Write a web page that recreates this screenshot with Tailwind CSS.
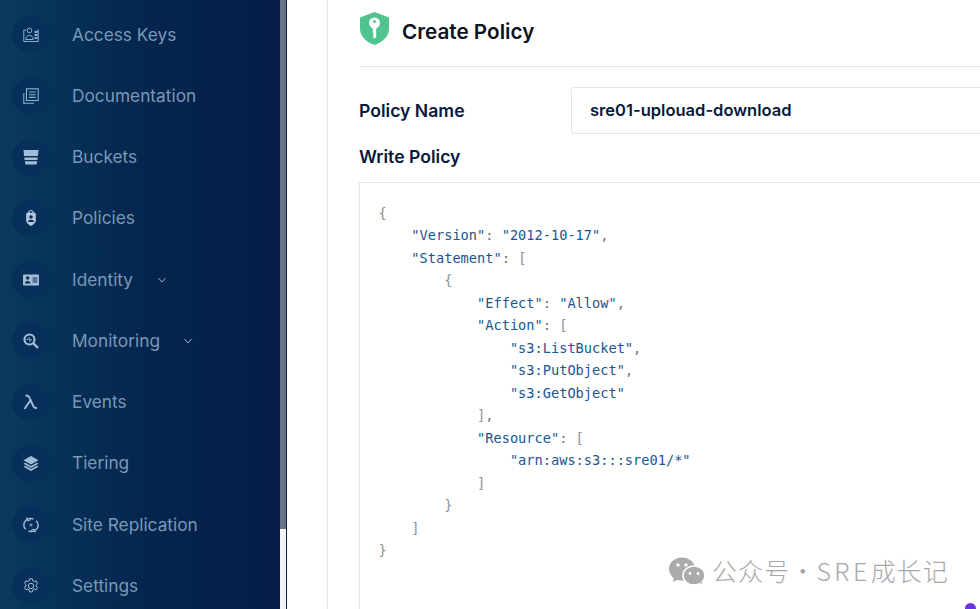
<!doctype html>
<html><head><meta charset="utf-8"><script src="https://cdn.jsdelivr.net/npm/@tailwindcss/browser@4"></script></head>
<body class="m-0 overflow-hidden bg-white">
<div class="flex h-[609px] w-[980px] overflow-hidden bg-white font-['Inter',sans-serif]">
  <!-- sidebar -->
  <aside class="flex h-full w-[280px] shrink-0 flex-col overflow-hidden bg-gradient-to-r from-[#0a3a5e] via-[#04264f] via-50% to-[#061c49] pt-[4px] text-[17.3px] text-[#7a98b6]">
    <div class="flex h-[61.25px] shrink-0 items-center"><span class="ml-3 flex h-[37px] w-[37px] items-center justify-center rounded-full bg-[#06305a]">
      <svg class="h-[16px] w-[16px]" viewBox="0 0 16 16" fill="none" stroke="#8eb0cf" stroke-width="1"><path d="M3 3H.8v11.500h14.400V3H14"/><circle cx="6.500" cy="3.500" r="2.300"/><path d="M2.800 12.500c0-5.500 7.400-5.500 7.400 0z"/><path d="M11.500 5h3M11.500 8h3M11.500 11h3" stroke-width="1.800"/></svg></span><span class="ml-[23px]">Access Keys</span></div>
    <div class="flex h-[61.25px] shrink-0 items-center"><span class="ml-3 flex h-[37px] w-[37px] items-center justify-center rounded-full bg-[#06305a]">
      <svg class="h-[16px] w-[16px]" viewBox="0 0 16 16" fill="none" stroke="#8eb0cf" stroke-width="1.100"><path d="M.8 5v10.200H11"/><rect x="3.500" y=".8" width="11.700" height="11.700"/><path d="M6 4h6.700M6 6.700h6.700M6 9.400h6.700"/></svg></span><span class="ml-[23px]">Documentation</span></div>
    <div class="flex h-[61.25px] shrink-0 items-center"><span class="ml-3 flex h-[37px] w-[37px] items-center justify-center rounded-full bg-[#06305a]">
      <svg class="h-[16px] w-[16px]" viewBox="0 0 16 16" fill="#a3bdd6"><path d="M.5 1h15l-.6 6H1.100zM1.300 8.500h13.400l-.2 2.500H1.600zM1.800 12.300h12.400l-.7 3.200h-11z"/></svg></span><span class="ml-[23px]">Buckets</span></div>
    <div class="flex h-[61.25px] shrink-0 items-center"><span class="ml-3 flex h-[37px] w-[37px] items-center justify-center rounded-full bg-[#06305a]">
      <svg class="h-[16px] w-[16px]" viewBox="0 0 16 16"><path fill="#b3c8dc" d="M8 0a3 3 0 0 1 3 2.600l1.800.6v7.300C12.800 13 10 15 8 16c-2-1-4.800-3-4.800-5.500V3.200L5 2.600A3 3 0 0 1 8 0z"/><path fill="#06305a" d="M6.300 2.800a1.700 1.700 0 0 1 3.400 0z"/><circle cx="8" cy="7" r="1.800" fill="#06305a"/><path fill="#06305a" d="M5 12c0-3 6-3 6 0z"/></svg></span><span class="ml-[23px]">Policies</span></div>
    <div class="flex h-[61.25px] shrink-0 items-center"><span class="ml-3 flex h-[37px] w-[37px] items-center justify-center rounded-full bg-[#06305a]">
      <svg class="h-[16px] w-[16px]" viewBox="0 0 16 16"><rect y="2.500" width="16" height="11" rx="1" fill="#a3bdd6"/><circle cx="4.700" cy="6" r="1.700" fill="#06305a"/><path fill="#06305a" d="M1.800 11.500c0-3.500 5.800-3.500 5.800 0z"/><path stroke="#06305a" d="M9.500 6h5M9.500 8h5M9.500 10h5"/></svg></span><span class="ml-[23px]">Identity</span>
      <span class="ml-[19px] flex h-[18px] w-[20px] items-center justify-center bg-[#05234d]"><svg class="h-[8px] w-[8px]" viewBox="0 0 8 8" fill="none" stroke="#8eb0cf"><path d="M.5 2 4 6l3.500-4"/></svg></span></div>
    <div class="flex h-[61.25px] shrink-0 items-center"><span class="ml-3 flex h-[37px] w-[37px] items-center justify-center rounded-full bg-[#06305a]">
      <svg class="h-[16px] w-[16px]" viewBox="0 0 16 16" fill="none"><circle cx="6.500" cy="6.500" r="5" stroke="#a3bdd6" stroke-width="2.200"/><path d="M3.500 6.500h1.500l1-2 1 4 .8-2h1.200" stroke="#a3bdd6" stroke-width=".8"/><path d="M10.500 10.500 15 15" stroke="#a3bdd6" stroke-width="2.400"/></svg></span><span class="ml-[23px]">Monitoring</span>
      <span class="ml-[18px] flex h-[20px] w-[20px] items-center justify-center rounded-full bg-[#05234d]"><svg class="h-[8px] w-[8px]" viewBox="0 0 8 8" fill="none" stroke="#8eb0cf"><path d="M.5 2 4 6l3.500-4"/></svg></span></div>
    <div class="flex h-[61.25px] shrink-0 items-center"><span class="ml-3 flex h-[37px] w-[37px] items-center justify-center rounded-full bg-[#06305a]">
      <svg class="h-[16px] w-[16px]" viewBox="0 0 16 16" fill="none" stroke="#a3bdd6" stroke-width="1.900"><path d="M2.500 1.500c3 0 3.500 1 5 4.500l3 6.500c.6 1.300 1.500 1.800 3.500 1.500M7.600 6 1.500 15"/></svg></span><span class="ml-[23px]">Events</span></div>
    <div class="flex h-[61.25px] shrink-0 items-center"><span class="ml-3 flex h-[37px] w-[37px] items-center justify-center rounded-full bg-[#06305a]">
      <svg class="h-[16px] w-[16px]" viewBox="0 0 16 16" fill="#a3bdd6"><path d="m8 1 7.500 4.200L8 9.400.5 5.200z"/><path d="M2.200 7.700.5 8.700 8 13l7.500-4.300-1.700-1L8 11zM2.200 10.700l-1.700 1L8 16l7.500-4.300-1.700-1L8 14z"/></svg></span><span class="ml-[23px]">Tiering</span></div>
    <div class="flex h-[61.25px] shrink-0 items-center"><span class="ml-3 flex h-[37px] w-[37px] items-center justify-center rounded-full bg-[#06305a]">
      <svg class="h-[16px] w-[16px]" viewBox="0 0 16 16" fill="none" stroke="#a3bdd6" stroke-width="1.400"><path d="M10.500 2.200C6-.2.800 3.500.8 8c0 1.800.8 3.300 2 4.300"/><path d="M5.500 13.800c4.500 2.400 9.700-1.300 9.700-5.800 0-1.800-.8-3.300-2-4.300"/><path d="M3.500.5 5 3.800 8 2.500M12.500 15.500 11 12.200 8 13.500" stroke-width="1.100"/><path d="M8 6.500v3M6.500 8h3" stroke-width=".9"/></svg></span><span class="ml-[23px]">Site Replication</span></div>
    <div class="flex h-[61.25px] shrink-0 items-center"><span class="ml-3 flex h-[37px] w-[37px] items-center justify-center rounded-full bg-[#06305a]">
      <svg class="h-[16px] w-[16px]" viewBox="0 0 16 16" fill="none" stroke="#a3bdd6" stroke-width="1"><circle cx="8" cy="8" r="2.700"/><path d="M6.600.8h2.800l.4 2 1.300.7 2-.7 1.400 2.400-1.500 1.400v1.500l1.500 1.300-1.400 2.400-2-.7-1.300.8-.4 2H6.600l-.4-2-1.300-.8-2 .7-1.400-2.400 1.500-1.300V6.600L1.500 5.200l1.400-2.400 2 .7 1.300-.7z"/></svg></span><span class="ml-[23px]">Settings</span></div>
  </aside>
  <!-- scrollbar -->
  <div class="flex h-full w-[6px] shrink-0 flex-col bg-[#f1f3f6]"><div class="h-[529px] bg-[#687388]"></div></div>
  <div class="h-full w-px shrink-0 bg-[#0a1f44]"></div>
  <!-- gutter -->
  <div class="h-full w-[41px] shrink-0 border-r border-[#e5e5e5] bg-white"></div>
  <!-- main -->
  <main class="relative min-w-0 flex-1 pl-[31px]">
    <div class="ml-px flex h-[67px] items-start border-b border-[#e5e5e5] pt-[12px]">
      <svg class="h-[33px] w-[29px] shrink-0" viewBox="0 0 29 33"><path fill="#4fc48f" d="M14.500 0 29 5.500V17c0 7-6 13-14.500 16C6 30 0 24 0 17V5.500z"/><circle cx="14.500" cy="11" r="5.500" fill="#fff"/><path fill="#fff" d="M12.800 14h3.400v11l-1.700 1.500-1.700-1.500 1-1-1-1 1-1-1-1z"/><circle cx="14.500" cy="9.500" r="1.500" fill="#4fc48f"/></svg>
      <h1 class="ml-[13px] mt-[6px] text-[20.7px] leading-[28px] font-semibold text-[#0b1220]">Create Policy</h1>
    </div>
    <div class="mt-[20px] flex h-[47px] items-center">
      <label class="w-[212px] shrink-0 pt-[2px] text-[17.6px] font-semibold text-[#07193e]">Policy Name</label>
      <div class="flex h-[47px] w-[500px] shrink-0 items-center rounded-[3px] border border-[#e5e5e5] pl-[18px] text-[16.55px] font-semibold text-[#07193e]">sre01-uplouad-download</div>
    </div>
    <div class="mt-[11px] h-[24px] text-[17.6px] leading-[24px] font-semibold text-[#07193e]">Write Policy</div>
    <div class="mt-[13px] h-[500px] w-[700px] border border-[#e5e5e5] pt-[19px] pl-[18.5px]">
<pre class="m-0 font-['DejaVu_Sans_Mono',monospace] text-[13.65px] leading-[22.47px] text-[#1a568f]"><span class="text-[#8a939c]">{</span>
    "Version"<span class="text-[#6b7480]">:</span> "2012-10-17"<span class="text-[#6b7480]">,</span>
    "Statement"<span class="text-[#6b7480]">:</span> <span class="text-[#8a939c]">[</span>
        <span class="text-[#8a939c]">{</span>
            "Effect"<span class="text-[#6b7480]">:</span> "Allow"<span class="text-[#6b7480]">,</span>
            "Action"<span class="text-[#6b7480]">:</span> <span class="text-[#8a939c]">[</span>
                "s3:ListBucket"<span class="text-[#6b7480]">,</span>
                "s3:PutObject"<span class="text-[#6b7480]">,</span>
                "s3:GetObject"
            <span class="text-[#8a939c]">]</span><span class="text-[#6b7480]">,</span>
            "Resource"<span class="text-[#6b7480]">:</span> <span class="text-[#8a939c]">[</span>
                "arn:aws:s3:::sre01/*"
            <span class="text-[#8a939c]">]</span>
        <span class="text-[#8a939c]">}</span>
    <span class="text-[#8a939c]">]</span>
<span class="text-[#8a939c]">}</span></pre>
    </div>
    <!-- watermark -->
    <div class="absolute left-[341px] top-[557px] flex items-center">
      <svg class="h-[28px] w-[36px]" viewBox="0 0 36 28" fill="#ababab"><ellipse cx="13" cy="12" rx="13" ry="11.500"/><path d="m5 20-1 5 6-3z"/><ellipse cx="25" cy="18.500" rx="11" ry="9.500" stroke="#fff" stroke-width="1.500"/><path d="m31 26 2 2-.5-4z"/><circle cx="9" cy="8" r="1.700" fill="#fff"/><circle cx="17" cy="8" r="1.700" fill="#fff"/><circle cx="21" cy="16.500" r="1.400" fill="#fff"/><circle cx="29" cy="16.500" r="1.400" fill="#fff"/></svg>
      <span class="ml-[7px] -mt-[2px] font-['Noto_Sans_CJK_SC',sans-serif] text-[25px] leading-[28px] font-light tracking-[1.1px] text-[#a8a8a8]">公众号·<span class="tracking-[3.4px]">SRE</span>成长记</span>
    </div>
    <div class="absolute left-[637px] top-[603px] h-[11px] w-[11px] rounded-full bg-[#6a35e0]"></div>
  </main>
</div>
</body></html>
